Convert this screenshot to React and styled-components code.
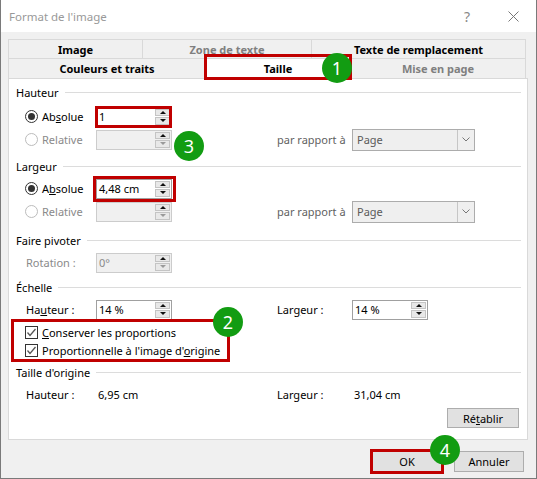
import React from 'react';
import styled, {createGlobalStyle} from 'styled-components';

const GlobalStyle = createGlobalStyle`
  html, body {
    margin: 0;
    padding: 0;
    background: #fff;
  }
  body {
    font-family: "Noto Sans", "Open Sans", sans-serif;
    font-size: 11px;
    color: #000;
  }
`;

const Window = styled.div`
  box-sizing: border-box;
  width: 537px;
  height: 479px;
  display: flex;
  flex-direction: column;
  background: #f0f0f0;
  border: 1px solid #7a7a7a;
  border-top: none;
`;

const TitleBar = styled.div`
  height: 32px;
  flex: none;
  display: flex;
  align-items: center;
  background: #fff;
  padding-left: 8px;
  color: #999;
`;

const Title = styled.span`
  flex: 1;
  font-size: 11.5px;
`;

const TitleButton = styled.span`
  width: 46px;
  height: 32px;
  display: flex;
  align-items: center;
  justify-content: center;
  color: #888;
  font-size: 14px;
`;

const Body = styled.div`
  flex: 1;
  padding: 7px 8px 0 7px;
`;

const Tabs = styled.div`
  width: 518px;
  display: flex;
  flex-direction: column;
`;

const TabRow = styled.div`
  display: flex;
  height: ${(p) => p.$height}px;
`;

const Tab = styled.div`
  position: relative;
  box-sizing: border-box;
  width: ${(p) => p.$width}px;
  display: flex;
  align-items: center;
  justify-content: center;
  border-top: 1px solid #d9d9d9;
  border-left: 1px solid #d9d9d9;
  &:last-child {
    border-right: 1px solid #d9d9d9;
  }
  background: ${(p) => (p.$selected ? '#fff' : '#f0f0f0')};
  color: ${(p) => (p.$disabled ? '#7f7f7f' : '#000')};
  font-weight: 700;
  white-space: nowrap;
`;

const Mark = styled.div`
  position: absolute;
  top: ${(p) => p.$t}px;
  right: ${(p) => p.$r}px;
  bottom: ${(p) => p.$b}px;
  left: ${(p) => p.$l}px;
  border: 3px solid #c00000;
  pointer-events: none;
  z-index: 2;
`;

const Badge = styled.div`
  position: absolute;
  left: ${(p) => p.$x}px;
  top: ${(p) => p.$y}px;
  width: 30px;
  height: 30px;
  border-radius: 50%;
  background: #129c12;
  color: #fff;
  font-size: 18px;
  font-weight: 400;
  display: flex;
  align-items: center;
  justify-content: center;
  z-index: 3;
`;

const Panel = styled.div`
  background: #fff;
  border: 1px solid #d9d9d9;
  padding: 5px 6px 11px 7px;
`;

const Section = styled.div`
  margin-top: ${(p) => p.$gap || 0}px;
`;

const SectionHeader = styled.div`
  height: 16px;
  display: flex;
  align-items: center;
  gap: 6px;
  white-space: nowrap;
  &::after {
    content: '';
    flex: 1;
    height: 1px;
    background: #dcdcdc;
  }
`;

const SectionBody = styled.div`
  padding-top: ${(p) => p.$pad}px;
`;

const Row = styled.div`
  display: grid;
  grid-template-columns: 72px 76px 103px 77px 124px;
  align-items: center;
  height: 23px;
  margin-left: 8px;
  white-space: nowrap;
`;

const Label = styled.span`
  padding-left: 2px;
  color: ${(p) => (p.$disabled ? '#8a8a8a' : p.$muted ? '#5f5f5f' : '#000')};
`;

const RadioLabel = styled.label`
  display: flex;
  align-items: center;
  gap: 4px;
  padding-left: 1px;
  color: ${(p) => (p.$disabled ? '#8a8a8a' : '#000')};
`;

const RadioCircle = styled.span`
  box-sizing: border-box;
  width: 13px;
  height: 13px;
  border-radius: 50%;
  border: 1px solid ${(p) => (p.$disabled ? '#bcbcbc' : '#333')};
  background: #fff;
  display: flex;
  align-items: center;
  justify-content: center;
  &::after {
    content: '';
    display: ${(p) => (p.$checked ? 'block' : 'none')};
    width: 7px;
    height: 7px;
    border-radius: 50%;
    background: #333;
  }
`;

const InputBox = styled.div`
  position: relative;
  box-sizing: border-box;
  width: 76px;
  height: 20px;
  display: flex;
  align-items: center;
  border: 1px solid ${(p) => (p.$disabled ? '#cccccc' : '#a0a0a0')};
  background: ${(p) => (p.$disabled ? '#f0f0f0' : '#fff')};
  color: ${(p) => (p.$disabled ? '#8a8a8a' : '#000')};
`;

const InputValue = styled.span`
  flex: 1;
  padding-left: 2px;
  white-space: nowrap;
`;

const Spin = styled.div`
  align-self: stretch;
  width: 15px;
  margin: 1px;
  display: flex;
  flex-direction: column;
  gap: 1px;
`;

const SpinHalf = styled.span`
  flex: 1;
  box-sizing: border-box;
  border: 1px solid #c4c4c4;
  background: #e8e8e8;
  display: flex;
  align-items: center;
  justify-content: center;
  &::after {
    content: '';
    width: 0;
    height: 0;
    border-left: 3.5px solid transparent;
    border-right: 3.5px solid transparent;
    ${(p) =>
      p.$down
        ? `border-top: 3.5px solid ${p.$dim ? '#9a9a9a' : '#111'};`
        : `border-bottom: 3.5px solid #111;`}
  }
`;

const Select = styled.div`
  box-sizing: border-box;
  width: 123px;
  height: 22px;
  display: flex;
  align-items: center;
  border: 1px solid #acacac;
  background: #efefef;
  color: #5a5a5a;
`;

const SelectValue = styled.span`
  flex: 1;
  padding-left: 4px;
`;

const SelectArrow = styled.span`
  width: 16px;
  align-self: stretch;
  border-left: 1px solid #c6c6c6;
  display: flex;
  align-items: center;
  justify-content: center;
`;

const CheckGroup = styled.div`
  position: relative;
  width: 211px;
  margin-top: 1px;
  padding: 1px 0 0 9px;
  box-sizing: border-box;
  white-space: nowrap;
`;

const CheckRow = styled.label`
  height: 18px;
  display: flex;
  align-items: center;
  gap: 4px;
`;

const CheckBox = styled.span`
  box-sizing: border-box;
  width: 13px;
  height: 13px;
  border: 1px solid #333;
  background: #fff;
  display: flex;
  align-items: center;
  justify-content: center;
`;

const ResetRow = styled.div`
  display: flex;
  justify-content: flex-end;
  margin: 2px 2px 0 0;
`;

const Button = styled.button`
  position: relative;
  box-sizing: border-box;
  width: ${(p) => p.$width}px;
  height: ${(p) => p.$height}px;
  padding: 0;
  border: 1px solid #adadad;
  background: #e1e1e1;
  font: inherit;
  color: #000;
`;

const Footer = styled.div`
  display: flex;
  justify-content: flex-end;
  gap: 12px;
  padding: 11px 4px 0 0;
`;

function Radio({checked, disabled, children}) {
  return (
    <RadioLabel $disabled={disabled}>
      <RadioCircle $checked={checked} $disabled={disabled} />
      <span>{children}</span>
    </RadioLabel>
  );
}

function SpinInput({value, disabled, dimDown, children}) {
  return (
    <InputBox $disabled={disabled}>
      <InputValue>{value}</InputValue>
      <Spin>
        <SpinHalf />
        <SpinHalf $down $dim={dimDown} />
      </Spin>
      {children}
    </InputBox>
  );
}

function PageSelect() {
  return (
    <Select>
      <SelectValue>Page</SelectValue>
      <SelectArrow>
        <svg width="8" height="5" viewBox="0 0 8 5">
          <polyline points="0.5,0.5 4,4 7.5,0.5" fill="none" stroke="#777" strokeWidth="1" />
        </svg>
      </SelectArrow>
    </Select>
  );
}

function Check({children}) {
  return (
    <CheckRow>
      <CheckBox>
        <svg width="11" height="11" viewBox="0 0 11 11">
          <polyline points="1.5,5.5 4,8.5 9.5,2" fill="none" stroke="#555" strokeWidth="1.3" />
        </svg>
      </CheckBox>
      <span>{children}</span>
    </CheckRow>
  );
}

export default function App() {
  return (
    <>
      <GlobalStyle />
      <Window>
        <TitleBar>
          <Title>Format de l'image</Title>
          <TitleButton>?</TitleButton>
          <TitleButton>
            <svg width="11" height="11" viewBox="0 0 11 11">
              <path d="M0.5 0.5 L10.5 10.5 M10.5 0.5 L0.5 10.5" stroke="#777" strokeWidth="1" />
            </svg>
          </TitleButton>
        </TitleBar>

        <Body>
          <Tabs>
            <TabRow $height={19}>
              <Tab $width={134}>Image</Tab>
              <Tab $width={169} $disabled>
                Zone de texte
              </Tab>
              <Tab $width={215}>Texte de remplacement</Tab>
            </TabRow>
            <TabRow $height={20}>
              <Tab $width={197}>Couleurs et traits</Tab>
              <Tab $width={145} $selected>
                Taille
                <Mark $t={-5} $r={-2} $b={-2} $l={-2} />
                <Badge $x={116} $y={-6}>1</Badge>
              </Tab>
              <Tab $width={176} $disabled>
                Mise en page
              </Tab>
            </TabRow>
          </Tabs>

          <Panel>
            <Section>
              <SectionHeader>Hauteur</SectionHeader>
              <SectionBody $pad={5}>
                <Row>
                  <Radio checked>
                    Ab<u>s</u>olue
                  </Radio>
                  <SpinInput value="1">
                    <Mark $t={-2} $r={-1} $b={-2} $l={-2} />
                  </SpinInput>
                </Row>
                <Row>
                  <Radio disabled>Relative</Radio>
                  <SpinInput value="" disabled dimDown>
                    <Badge $x={77} $y={0}>3</Badge>
                  </SpinInput>
                  <span />
                  <Label $muted>par rapport à</Label>
                  <PageSelect />
                </Row>
              </SectionBody>
            </Section>

            <Section $gap={7}>
              <SectionHeader>Largeur</SectionHeader>
              <SectionBody $pad={3}>
                <Row>
                  <Radio checked>
                    A<u>b</u>solue
                  </Radio>
                  <SpinInput value="4,48 cm">
                    <Mark $t={-4} $r={-5} $b={-4} $l={-4} />
                  </SpinInput>
                </Row>
                <Row>
                  <Radio disabled>Relative</Radio>
                  <SpinInput value="" disabled dimDown />
                  <span />
                  <Label $muted>par rapport à</Label>
                  <PageSelect />
                </Row>
              </SectionBody>
            </Section>

            <Section $gap={9}>
              <SectionHeader>Faire pivoter</SectionHeader>
              <SectionBody $pad={3}>
                <Row>
                  <Label $disabled>Rotation :</Label>
                  <SpinInput value="0°" disabled dimDown />
                </Row>
              </SectionBody>
            </Section>

            <Section $gap={5}>
              <SectionHeader>Échelle</SectionHeader>
              <SectionBody $pad={3}>
                <Row>
                  <Label>
                    Ha<u>u</u>teur :
                  </Label>
                  <SpinInput value="14 %" />
                  <span />
                  <Label>
                    Lar<u>g</u>eur :
                  </Label>
                  <SpinInput value="14 %" />
                </Row>
                <CheckGroup>
                  <Check>
                    <u>C</u>onserver les proportions
                  </Check>
                  <Check>
                    Proportionnelle à l'image d'<u>o</u>rigine
                  </Check>
                  <Mark $t={-3} $r={-3} $b={-3} $l={-5} />
                  <Badge $x={197} $y={-15}>2</Badge>
                </CheckGroup>
              </SectionBody>
            </Section>

            <Section $gap={5}>
              <SectionHeader>Taille d'origine</SectionHeader>
              <SectionBody $pad={3}>
                <Row>
                  <Label>Hauteur :</Label>
                  <Label>6,95 cm</Label>
                  <span />
                  <Label>Largeur :</Label>
                  <Label>31,04 cm</Label>
                </Row>
              </SectionBody>
            </Section>

            <ResetRow>
              <Button $width={72} $height={20}>
                Ré<u>t</u>ablir
              </Button>
            </ResetRow>
          </Panel>

          <Footer>
            <Button $width={70} $height={21}>
              OK
              <Mark $t={-3} $r={-3} $b={-3} $l={-3} />
              <Badge $x={57} $y={-17}>4</Badge>
            </Button>
            <Button $width={70} $height={21}>
              Annuler
            </Button>
          </Footer>
        </Body>
      </Window>
    </>
  );
}
